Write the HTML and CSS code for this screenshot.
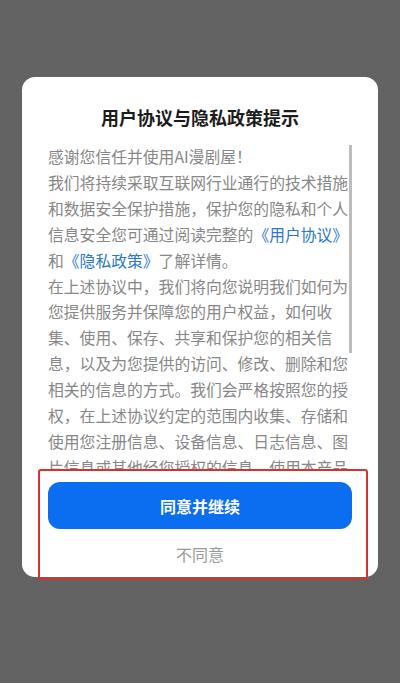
FILE: index.html
```html
<!DOCTYPE html>
<html lang="zh-CN">
<head>
<meta charset="utf-8">
<link rel="stylesheet" href="styles.css">
</head>
<body>
<div class="screen">
  <div class="dialog">
    <h1 class="title">用户协议与隐私政策提示</h1>
    <div class="scroll">
      <div class="content">
        <p>感谢您信任并使用AI漫剧屋！</p>
        <p>我们将持续采取互联网行业通行的技术措施和数据安全保护措施，保护您的隐私和个人信息安全您可通过阅读完整的<a class="link">《用户协议》</a>和<a class="link">《隐私政策》</a>了解详情。</p>
        <p>在上述协议中，我们将向您说明我们如何为您提供服务并保障您的用户权益，如何收集、使用、保存、共享和保护您的相关信息，以及为您提供的访问、修改、删除和您相关的信息的方式。我们会严格按照您的授权，在上述协议约定的范围内收集、存储和使用您注册信息、设备信息、日志信息、图片信息或其他经您授权的信息，使用本产品即表示您同意上述协议。</p>
      </div>
      <div class="scrollbar"></div>
    </div>
    <div class="actions">
      <button class="agree">同意并继续</button>
      <button class="disagree">不同意</button>
    </div>
  </div>
  <div class="highlight"></div>
</div>
</body>
</html>
```
FILE: styles.css
```css
* { box-sizing: border-box; }
html, body {
  margin: 0;
  padding: 0;
  width: 400px;
  height: 683px;
  background: #636363;
  font-family: "Noto Sans CJK SC", "Noto Sans", sans-serif;
}
.screen {
  position: relative;
  width: 400px;
  height: 683px;
  padding: 77px 22px 0 22px;
}
.dialog {
  background: #ffffff;
  border-radius: 13px;
  width: 356px;
  height: 500px;
  padding: 0 26px;
  display: flex;
  flex-direction: column;
}
.title {
  margin: 0;
  height: 67px;
  padding-top: 27px;
  font-size: 18px;
  line-height: 26px;
  font-weight: 700;
  color: #1c1c1c;
  text-align: center;
}
.scroll {
  position: relative;
  height: 327px;
  overflow: hidden;
}
.content {
  width: 302px;
  font-size: 15.8px;
  line-height: 25.9px;
  color: #878787;
}
.content p { margin: 0; }
.link { color: #2c78c6; }
.scrollbar {
  position: absolute;
  right: 0;
  top: 1px;
  width: 3px;
  height: 208px;
  background: #bdbdbd;
}
.actions {
  display: flex;
  flex-direction: column;
  align-items: stretch;
  padding-top: 11px;
}
.agree {
  height: 47px;
  border: none;
  border-radius: 12px;
  background: #0b6df0;
  color: #ffffff;
  font-family: inherit;
  font-size: 16px;
  font-weight: 700;
}
.disagree {
  margin-top: 12px;
  height: 26px;
  border: none;
  background: none;
  color: #9a9a9a;
  font-family: inherit;
  font-size: 16px;
}
.highlight {
  position: absolute;
  left: 38px;
  top: 469px;
  width: 330px;
  height: 111px;
  border: 2px solid #d2352c;
  border-radius: 3px;
}
```
